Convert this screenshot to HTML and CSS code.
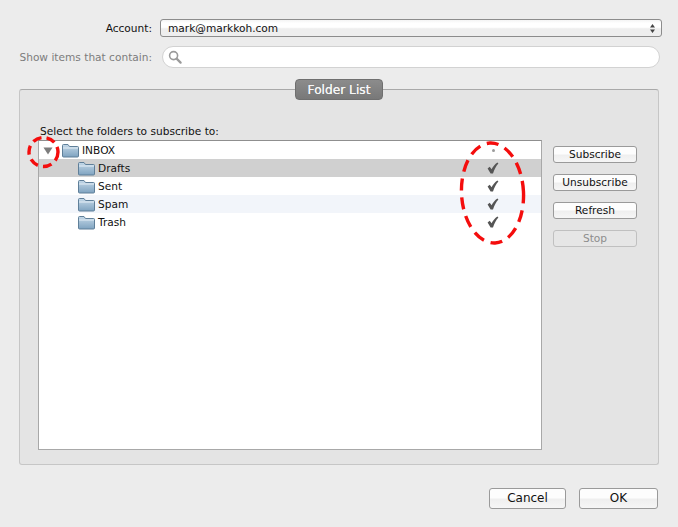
FILE: index.html
```html
<!DOCTYPE html>
<html lang="en">
<head>
<meta charset="utf-8">
<title>Folder List</title>
<link rel="stylesheet" href="styles.css">
</head>
<body>
<div class="dialog">
  <div class="form-row account-row">
    <span class="form-label">Account:</span>
    <div class="select">
      <span>mark@markkoh.com</span>
      <svg class="stepper" width="5" height="9" viewBox="0 0 5 9"><path d="M2.5 0 5 3.5H0Z M2.5 9 0 5.5H5Z" fill="#444"/></svg>
    </div>
  </div>
  <div class="form-row search-row">
    <span class="form-label dim">Show items that contain:</span>
    <div class="search">
      <svg width="14" height="14" viewBox="0 0 14 14"><circle cx="5.6" cy="5.6" r="4" fill="none" stroke="#9a9a9a" stroke-width="1.6"/><path d="M8.6 8.6 12.6 12.6" stroke="#9a9a9a" stroke-width="2.2" stroke-linecap="round"/></svg>
    </div>
  </div>

  <div class="group-wrap">
    <div class="tab">Folder List</div>
    <div class="group">
      <div class="select-label">Select the folders to subscribe to:</div>
      <div class="group-body">
        <div class="list">
          <div class="row">
            <svg class="disclosure" width="10" height="8" viewBox="0 0 10 8"><path d="M0.5 0.5H9.5L5 7.5Z" fill="#7d7d7d"/></svg>
            <svg class="folder" width="17" height="15" viewBox="0 0 17 15"><use href="#folder-icon"/></svg>
            <span class="name">INBOX</span>
            <span class="mark"><span class="dot"></span></span>
          </div>
          <div class="row child selected">
            <svg class="folder" width="17" height="15" viewBox="0 0 17 15"><use href="#folder-icon"/></svg>
            <span class="name">Drafts</span>
            <span class="mark"><svg width="12" height="12" viewBox="0 0 12 12"><use href="#check-icon"/></svg></span>
          </div>
          <div class="row child">
            <svg class="folder" width="17" height="15" viewBox="0 0 17 15"><use href="#folder-icon"/></svg>
            <span class="name">Sent</span>
            <span class="mark"><svg width="12" height="12" viewBox="0 0 12 12"><use href="#check-icon"/></svg></span>
          </div>
          <div class="row child striped">
            <svg class="folder" width="17" height="15" viewBox="0 0 17 15"><use href="#folder-icon"/></svg>
            <span class="name">Spam</span>
            <span class="mark"><svg width="12" height="12" viewBox="0 0 12 12"><use href="#check-icon"/></svg></span>
          </div>
          <div class="row child">
            <svg class="folder" width="17" height="15" viewBox="0 0 17 15"><use href="#folder-icon"/></svg>
            <span class="name">Trash</span>
            <span class="mark"><svg width="12" height="12" viewBox="0 0 12 12"><use href="#check-icon"/></svg></span>
          </div>
        </div>
        <div class="side-buttons">
          <div class="btn">Subscribe</div>
          <div class="btn">Unsubscribe</div>
          <div class="btn">Refresh</div>
          <div class="btn disabled">Stop</div>
        </div>
      </div>
    </div>
  </div>

  <div class="footer">
    <div class="btn big cancel">Cancel</div>
    <div class="btn big ok">OK</div>
  </div>
</div>

<svg class="annotations" width="678" height="527" viewBox="0 0 678 527">
  <ellipse cx="43.5" cy="152" rx="14.5" ry="14.5" fill="none" stroke="#f40d0d" stroke-width="3.4" stroke-dasharray="9 5.2"/>
  <ellipse cx="492.5" cy="193" rx="31" ry="50" fill="none" stroke="#f40d0d" stroke-width="3.4" stroke-dasharray="12 7" transform="rotate(-3 492.5 193)"/>
</svg>

<svg class="defs" width="0" height="0">
  <defs>
    <linearGradient id="folder-grad" x1="0" y1="0" x2="0" y2="1">
      <stop offset="0" stop-color="#c4d8e8"/>
      <stop offset="1" stop-color="#7fa3c0"/>
    </linearGradient>
    <g id="folder-icon">
      <path d="M0.5 13V2.5Q0.5 1.5 1.5 1.5H6L7.5 3.5H15.5Q16.5 3.5 16.5 4.5V13Q16.5 14 15.5 14H1.5Q0.5 14 0.5 13Z" fill="url(#folder-grad)" stroke="#5f7f99" stroke-width="1"/>
      <path d="M1 5H16" stroke="#e4eef6" stroke-width="1"/>
    </g>
    <path id="check-icon" d="M0.6 6.6 2.7 4.8 4.6 7.2C6 4.2 8 2 10.4 0.4L11.4 1.4C9 4 7.4 7.4 6 11.4H3.6Z" fill="#555"/>
  </defs>
</svg>
</body>
</html>
```
FILE: styles.css
```css
* { box-sizing: border-box; }
html, body { margin: 0; padding: 0; }
body {
  width: 678px;
  height: 527px;
  overflow: hidden;
  background: #ececec;
  font-family: "DejaVu Sans", "Liberation Sans", sans-serif;
  font-size: 10.6px;
  color: #111;
  position: relative;
}
.dialog { padding-top: 19px; display: flex; flex-direction: column; height: 100%; }

.form-row { display: flex; align-items: center; }
.form-label { width: 152px; text-align: right; flex: none; }
.dim { color: #7c7c7c; }
.account-row { height: 18px; }
.select {
  margin-left: 8px;
  width: 502px;
  height: 18px;
  border: 1px solid #8c8c8c;
  border-radius: 3px;
  background: linear-gradient(#f4f4f4 0, #fff 20%, #fff 45%, #eeeeee 55%, #eeeeee 100%);
  display: flex;
  align-items: center;
  justify-content: space-between;
  padding: 0 6px 0 7px;
}
.stepper { flex: none; }
.search-row { height: 22px; margin-top: 9px; }
.search {
  margin-left: 10px;
  width: 498px;
  height: 22px;
  background: #fff;
  border: 1px solid #d2d2d2;
  border-radius: 11px;
  display: flex;
  align-items: center;
  padding-left: 5px;
}

.group-wrap { margin: 11px 19px 0; position: relative; display: flex; flex-direction: column; align-items: center; }
.tab {
  height: 21px;
  width: 88px;
  background: linear-gradient(#8c8c8c, #787878);
  border: 1px solid #6f6f6f;
  border-radius: 4px;
  color: #f6f6f6;
  font-size: 12.2px;
  text-align: center;
  line-height: 20px;
  text-shadow: 0 0 0.6px #f6f6f6;
  margin-bottom: -11px;
  position: relative;
  z-index: 1;
}
.group {
  width: 640px;
  height: 376px;
  background: #e4e4e4;
  border: 1px solid #c6c6c6;
  border-top: 1px solid #a9a9a9;
  border-radius: 3px;
  padding: 35px 0 0 18px;
}
.select-label { height: 15px; line-height: 13px; padding-left: 2px; }
.group-body { display: flex; align-items: flex-start; }
.list {
  width: 504px;
  height: 310px;
  background: #fff;
  border: 1px solid #a8a8a8;
  border-top-color: #8f8f8f;
  flex: none;
}
.row { height: 18px; display: flex; align-items: center; padding-left: 4px; }
.disclosure { flex: none; margin-right: 9px; margin-top: 2px; }
.row.child { padding-left: 39px; }
.folder { flex: none; }
.name { margin-left: 3px; flex: 1; }
.selected { background: #d0d0d0; }
.striped { background: #f2f5fa; }
.mark { width: 12px; margin-right: 42px; display: flex; justify-content: center; align-items: center; flex: none; }
.dot { width: 3px; height: 3px; border-radius: 50%; background: #9b9b9b; }

.side-buttons { display: flex; flex-direction: column; gap: 11px; margin: 6px 0 0 11px; }
.btn {
  width: 84px;
  height: 17px;
  background: linear-gradient(#fdfdfd 0, #fdfdfd 45%, #efefef 55%, #f6f6f6 100%);
  border: 1px solid #9a9a9a;
  border-radius: 3px;
  text-align: center;
  line-height: 15px;
}
.disabled { color: #8d8d8d; background: #e6e6e6; border-color: #c0c0c0; }

.footer { display: flex; margin: 23px 20px 0 0; justify-content: flex-end; gap: 13px; }
.btn.big { height: 21px; line-height: 19px; font-size: 12px; }
.cancel { width: 77px; }
.ok { width: 79px; }

.annotations { position: absolute; left: 0; top: 0; pointer-events: none; }
.defs { position: absolute; }
```
